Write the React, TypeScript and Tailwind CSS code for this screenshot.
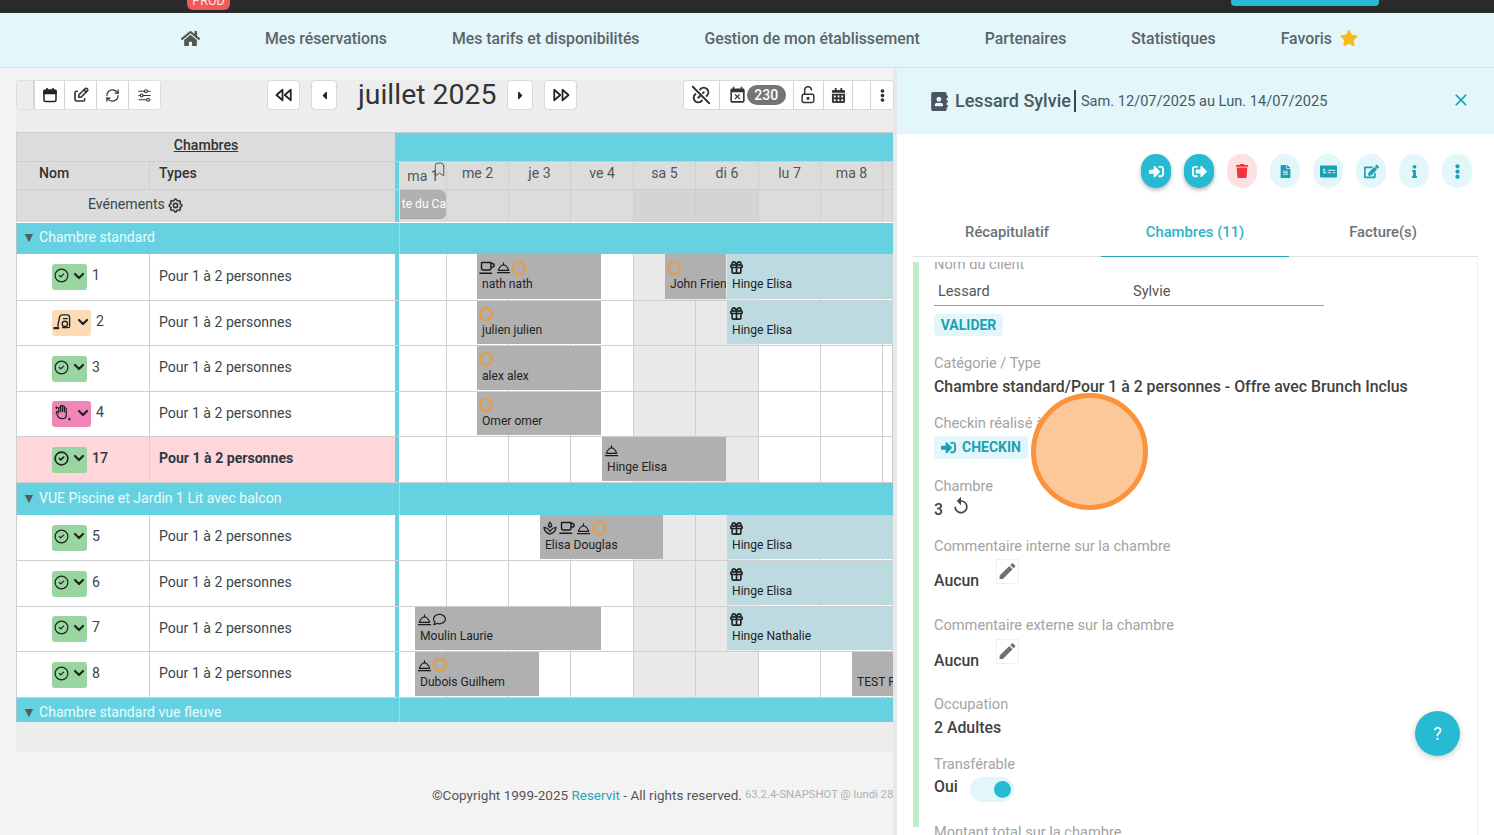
import React from 'react'
import {
  FaHome, FaStar, FaCaretLeft, FaCaretRight, FaAddressBook, FaSignInAlt, FaSignOutAlt,
  FaTrash, FaFileAlt, FaMoneyCheckAlt, FaEdit, FaInfo, FaEllipsisV, FaCalendarAlt, FaRegComment,
} from 'react-icons/fa'
import { MdOutlineSpa, MdEdit, MdEventBusy, MdClose, MdReplay } from 'react-icons/md'
import {
  TbEdit, TbAdjustmentsHorizontal, TbPlayerTrackPrev, TbPlayerTrackNext, TbLinkOff, TbLockOpen, TbSettings, TbGift, TbBookmark, TbCircleCheck, TbChevronDown,
} from 'react-icons/tb'
import { LuRefreshCw } from 'react-icons/lu'

const columns = [
  { w: 'w-[47px]', label: 'ma 1', pb: 'pt-[2px]' },
  { w: 'w-[62px]', label: 'me 2', pb: 'pb-[3px]' },
  { w: 'w-[62px]', label: 'je 3', pb: 'pb-[3px]' },
  { w: 'w-[63px]', label: 've 4', pb: 'pb-[3px]' },
  { w: 'w-[62px]', label: 'sa 5', pb: 'pb-[3px]', weekend: true },
  { w: 'w-[63px]', label: 'di 6', pb: 'pb-[3px]', weekend: true },
  { w: 'w-[62px]', label: 'lu 7', pb: 'pb-[3px]' },
  { w: 'w-[62px]', label: 'ma 8', pb: 'pb-[3px]' },
  { w: 'w-[10px]', label: '', pb: '' },
]

type Bar = { pos: string; name: string; icons?: string[]; pale?: boolean }
type Room = { h: string; status: 'ok' | 'clean' | 'hand'; num: string; bars: Bar[]; hot?: boolean }

const hinge = (name: string): Bar => ({ pos: 'left-[327px] w-[166px]', name, icons: ['gift'], pale: true })

const standard: Room[] = [
  { h: 'h-[47px]', status: 'ok', num: '1', bars: [
    { pos: 'left-[77px] w-[124px]', name: 'nath nath', icons: ['coffee', 'bell', 'ring'] },
    { pos: 'left-[265px] w-[61px]', name: 'John Friend', icons: ['ring'] },
    hinge('Hinge Elisa'),
  ] },
  { h: 'h-[45px]', status: 'clean', num: '2', bars: [
    { pos: 'left-[77px] w-[124px]', name: 'julien julien', icons: ['ring'] },
    hinge('Hinge Elisa'),
  ] },
  { h: 'h-[46px]', status: 'ok', num: '3', bars: [{ pos: 'left-[77px] w-[124px]', name: 'alex alex', icons: ['ring'] }] },
  { h: 'h-[45px]', status: 'hand', num: '4', bars: [{ pos: 'left-[77px] w-[124px]', name: 'Omer omer', icons: ['ring'] }] },
  { h: 'h-[46px]', status: 'ok', num: '17', hot: true, bars: [{ pos: 'left-[202px] w-[124px]', name: 'Hinge Elisa', icons: ['bell'] }] },
]

const piscine: Room[] = [
  { h: 'h-[46px]', status: 'ok', num: '5', bars: [
    { pos: 'left-[140px] w-[123px]', name: 'Elisa Douglas', icons: ['spa', 'coffee', 'bell', 'ring'] },
    hinge('Hinge Elisa'),
  ] },
  { h: 'h-[46px]', status: 'ok', num: '6', bars: [hinge('Hinge Elisa')] },
  { h: 'h-[45px]', status: 'ok', num: '7', bars: [
    { pos: 'left-[15px] w-[186px]', name: 'Moulin Laurie', icons: ['bell', 'comment'] },
    hinge('Hinge Nathalie'),
  ] },
  { h: 'h-[46px]', status: 'ok', num: '8', bars: [
    { pos: 'left-[15px] w-[124px]', name: 'Dubois Guilhem', icons: ['bell', 'ring'] },
    { pos: 'left-[452px] w-[41px]', name: 'TEST R' },
  ] },
]

const CoffeeIcon = () => (
  <svg viewBox="0 0 16 16" className="size-[16px]" fill="none" stroke="#1a1a1a" strokeWidth="1.4" strokeLinecap="round" strokeLinejoin="round">
    <path d="M2.5 2.5 H12 V8 a2 2 0 0 1 -2 2 H4.5 a2 2 0 0 1 -2 -2 Z" />
    <path d="M12 3.5 H13.3 a1.6 1.6 0 0 1 0 3.6 H12" />
    <path d="M1 13.2 H12.5" strokeWidth="1.6" />
  </svg>
)

const BellIcon = () => (
  <svg viewBox="0 0 16 16" className="size-[15px]" fill="none" stroke="#1a1a1a" strokeWidth="1.2" strokeLinecap="round" strokeLinejoin="round">
    <path d="M2.5 11 Q4.5 5.5 8 5 Q11.5 5.5 13.5 11 Z" />
    <path d="M8 3 V5" />
    <path d="M1.5 13.5 H14.5" />
  </svg>
)

const CalendarIcon = () => (
  <svg viewBox="0 0 16 16" className="size-[16px]" fill="none" stroke="#222" strokeWidth="1.5">
    <rect x="2" y="3" width="12" height="11.5" rx="1.5" />
    <path d="M2 4 H14 V6.5 H2 Z" fill="#222" />
    <path d="M5 1 V3 M11 1 V3" strokeWidth="1.6" />
  </svg>
)

const BarIcon = ({ name }: { name: string }) => {
  if (name === 'ring') return <span className="block size-[14px] rounded-full border-2 border-[#ea9b3f]" />
  if (name === 'coffee') return <CoffeeIcon />
  if (name === 'bell') return <BellIcon />
  if (name === 'spa') return <MdOutlineSpa className="size-[16px]" />
  if (name === 'comment') return <FaRegComment className="size-[13px]" />
  return <TbGift className="size-[15px] stroke-[2.6]" />
}

const VacuumIcon = () => (
  <svg viewBox="0 0 20 20" className="size-[19px]" fill="none" stroke="#222" strokeWidth="1.4" strokeLinecap="round" strokeLinejoin="round">
    <path d="M5 15 L7 5 Q7.5 3 10 3 H15 Q17.5 3 17.5 6 V15 Q17.5 16.5 16 16.5 H10" />
    <circle cx="12.5" cy="12.5" r="2.8" />
    <path d="M11 7 H15" />
    <path d="M1.5 17 H5.5" strokeWidth="2.4" />
  </svg>
)

const HandIcon = () => (
  <svg viewBox="0 0 20 20" className="size-[19px]" fill="none" stroke="#222" strokeWidth="1.3" strokeLinecap="round" strokeLinejoin="round">
    <path d="M6 10 V5.5 a1 1 0 0 1 2 0 V9 M8 9 V3.5 a1 1 0 0 1 2 0 V9 M10 9 V4 a1 1 0 0 1 2 0 V9.5 M12 9.5 V6 a1 1 0 0 1 2 0 V12 q0 4.5 -4.5 4.5 q-3 0 -4.5 -3 L3.6 10.5 a1 1 0 0 1 1.8 -1 L6 10.5" />
    <path d="M2.5 5 H5 M3.7 3.8 V6.2 M16 17 H18.5 M17.2 15.8 V18.2" strokeWidth="1" />
  </svg>
)

const StatusBadge = ({ status, hot }: { status: Room['status']; hot?: boolean }) => {
  const bg = status === 'ok' ? 'bg-[#98d5a0] w-[35px]' : status === 'clean' ? 'bg-[#fbdcb6] w-[39px]' : 'bg-[#f085b8] w-[39px]'
  return (
    <div className={`flex h-[26px] items-center rounded-[3px] pb-[3px] pl-[1px] text-[#222] ${bg}`}>
      {status === 'ok' && <TbCircleCheck className={`size-[17px] ${hot ? 'stroke-[2.4]' : 'stroke-[1.7]'}`} />}
      {status === 'clean' && <VacuumIcon />}
      {status === 'hand' && <HandIcon />}
      <TbChevronDown className={`size-[16px] stroke-[3.2] ${status === 'ok' ? 'ml-[1px]' : 'ml-[3px]'}`} />
    </div>
  )
}

const Timeline = ({ bars }: { bars: Bar[] }) => (
  <div className="relative flex h-full w-[493px] overflow-hidden">
    {columns.map((c, i) => (
      <div key={i} className={`h-full border-r border-[#cfcfcf] last:border-r-0 ${c.w} ${c.weekend ? 'bg-[#e9e9e9]' : 'bg-white'}`} />
    ))}
    {bars.map((b, i) => (
      <div
        key={i}
        className={`absolute top-0 bottom-[1px] flex flex-col justify-center overflow-hidden pb-[1px] pl-[2px] whitespace-nowrap text-[12.1px] text-[#222] ${b.pos} ${b.pale ? 'bg-[#bddae0]' : 'bg-[#b0b0b0]'}`}
      >
        <div className="flex h-[15px] items-center gap-[1px]">
          {b.icons?.map((name, k) => <BarIcon key={k} name={name} />)}
        </div>
        <div className="mt-[1px] pl-[3px] leading-[16px]">{b.name}</div>
      </div>
    ))}
  </div>
)

const RoomRow = ({ room }: { room: Room }) => (
  <div className={`flex border-b border-[#cfcfcf] ${room.h}`}>
    <div className={`flex h-full w-[379px] border-l border-[#cfcfcf] text-[14.1px] ${room.hot ? 'bg-[#ffd6d9] font-bold text-[#2d3b42]' : 'bg-white text-[#37474f]'}`}>
      <div className="flex w-[133px] items-center border-r border-[#cfcfcf] pl-[35px]">
        <StatusBadge status={room.status} hot={room.hot} />
        <span className={`ml-[5px] -mt-[2px] ${room.hot ? 'font-medium' : ''}`}>{room.num}</span>
      </div>
      <div className="flex flex-1 items-center pb-[1px] pl-[9px]">Pour 1 à 2 personnes</div>
    </div>
    <div className="h-full w-[4px] bg-[#66d1e0]" />
    <div className="h-full w-[1px] bg-white" />
    <Timeline bars={room.bars} />
  </div>
)

const GroupRow = ({ label, h, pt }: { label: string; h: string; pt: string }) => (
  <div className={`flex overflow-hidden bg-[#66d1e0] ${h}`}>
    <div className={`flex w-[379px] items-start border-l border-[#a9c9cf] leading-[20px] text-[14.1px] text-[#eafbfd] ${pt}`}>
      <span className="ml-[5px] w-[17px] text-[14px] text-[#4f5f63]">▼</span>
      <span>{label}</span>
    </div>
    <div className="ml-[4px] h-full w-[1px] bg-[#9fdbe4]" />
  </div>
)

const ToolCell = ({ w, children }: { w: string; children?: React.ReactNode }) => (
  <div className={`flex h-full items-center justify-center border-l border-[#d4d4d4] bg-white text-[#333] first:border-l-0 ${w}`}>{children}</div>
)

const NavBtn = ({ w, ml, children }: { w: string; ml: string; children: React.ReactNode }) => (
  <div className={`flex h-[30px] items-center justify-center rounded-[4px] border border-[#d8d8d8] bg-white text-[#222] ${w} ${ml}`}>{children}</div>
)

const Toolbar = () => (
  <div className="flex h-[30px] w-[878px] items-center">
    <div className="flex h-full w-[145px] overflow-hidden rounded-[4px] border border-[#dedede]">
      <div className="h-full w-[17px] border-r border-[#d4d4d4] bg-[#ededed]" />
      <ToolCell w="w-[30px]"><CalendarIcon /></ToolCell>
      <ToolCell w="w-[32px]"><TbEdit className="size-[18px] stroke-[2.2]" /></ToolCell>
      <ToolCell w="w-[32px]"><LuRefreshCw className="size-[15px] stroke-[2]" /></ToolCell>
      <ToolCell w="w-[32px]"><TbAdjustmentsHorizontal className="size-[17px] stroke-[1.5]" /></ToolCell>
    </div>
    <NavBtn w="w-[33px]" ml="ml-[106px]"><TbPlayerTrackPrev className="size-[18px] stroke-[2.4]" /></NavBtn>
    <NavBtn w="w-[26px]" ml="ml-[11px]"><FaCaretLeft className="size-[13px]" /></NavBtn>
    <div className="ml-[21px] w-[149px] text-[28.4px] leading-[30px] text-[#333]">juillet 2025</div>
    <NavBtn w="w-[26px]" ml="ml-0"><FaCaretRight className="size-[13px]" /></NavBtn>
    <NavBtn w="w-[33px]" ml="ml-[11px]"><TbPlayerTrackNext className="size-[18px] stroke-[2.4]" /></NavBtn>
    <div className="ml-[106px] flex h-full w-[211px] overflow-hidden rounded-[4px] border border-[#d8d8d8]">
      <ToolCell w="w-[35px]"><TbLinkOff className="size-[22px] stroke-[2.1]" /></ToolCell>
      <ToolCell w="w-[75px]">
        <MdEventBusy className="size-[19px]" />
        <span className="-mr-[1px] flex h-[20px] w-[39px] items-center justify-center rounded-full bg-[#757575] text-[14px] font-medium text-white">230</span>
      </ToolCell>
      <ToolCell w="w-[30px]"><TbLockOpen className="size-[20px] stroke-[1.8]" /></ToolCell>
      <ToolCell w="w-[30px]"><FaCalendarAlt className="size-[15px]" /></ToolCell>
      <ToolCell w="w-[18px]" />
      <ToolCell w="w-[23px]"><FaEllipsisV className="size-[13px]" /></ToolCell>
    </div>
  </div>
)

const Planning = () => (
  <div className="mt-[22px] w-[877px] text-[14.1px]">
    <div className="flex h-[29px] border-t border-[#cfcfcf]">
      <div className="flex w-[379px] items-center justify-center border-l border-[#cfcfcf] bg-[#dcdcdc] pb-[3px] font-medium text-[#333] underline">Chambres</div>
      <div className="w-[4px] bg-[#66d1e0]" />
      <div className="flex-1 bg-[#66d1e0]" />
    </div>
    <div className="flex h-[28px] border-t border-[#cfcfcf] bg-[#dcdcdc]">
      <div className="flex w-[134px] items-center border-x border-[#cfcfcf] pb-[3px] pl-[22px] font-medium text-[#333]">Nom</div>
      <div className="flex w-[245px] items-center pb-[3px] pl-[9px] font-medium text-[#333]">Types</div>
      <div className="w-[4px] bg-[#66d1e0]" />
      <div className="w-[1px]" />
      <div className="relative flex h-full w-[493px]">
        {columns.map((c, i) => (
          <div key={i} className={`flex h-full items-center justify-center border-r border-[#cfcfcf] text-[#555] last:border-r-0 ${c.w} ${c.pb}`}>{c.label}</div>
        ))}
        <TbBookmark className="absolute left-[31px] -top-[1px] size-[17px] stroke-[1.4] text-[#555]" />
      </div>
    </div>
    <div className="flex h-[34px] border-y border-[#cfcfcf] border-b-white bg-[#dcdcdc]">
      <div className="flex w-[379px] items-center border-l border-[#cfcfcf] pb-[2px] pl-[71px] text-[#37474f]">
        Evénements
        <TbSettings className="ml-[2px] size-[17px] stroke-[2.2] text-[#333]" />
      </div>
      <div className="w-[4px] bg-[#66d1e0]" />
      <div className="w-[1px]" />
      <div className="relative flex h-full w-[493px]">
        {columns.map((c, i) => (
          <div key={i} className={`h-full border-r border-[#cfcfcf] last:border-r-0 ${c.w} ${c.weekend ? 'bg-[#d4d4d4]' : ''}`} />
        ))}
        <div className="absolute left-0 top-0 flex h-[29px] w-[46px] items-center justify-end overflow-hidden whitespace-nowrap rounded-r-[6px] border-b border-[#a5a5a5] bg-[#b0b0b0] text-[12.1px] text-white">te du Ca</div>
      </div>
    </div>
    <GroupRow label="Chambre standard" h="h-[31px]" pt="pt-[4px]" />
    {standard.map(r => <RoomRow key={r.num} room={r} />)}
    <GroupRow label="VUE Piscine et Jardin 1 Lit avec balcon" h="h-[32px]" pt="pt-[5px]" />
    {piscine.map(r => <RoomRow key={r.num} room={r} />)}
    <GroupRow label="Chambre standard vue fleuve" h="h-[24px]" pt="pt-[4px]" />
  </div>
)

const RoundAction = ({ tone, children }: { tone: 'solid' | 'danger' | 'soft'; children: React.ReactNode }) => {
  const cls = tone === 'solid'
    ? 'bg-[#26bbd2] text-white shadow-[0_2px_4px_rgba(0,0,0,0.3)]'
    : tone === 'danger' ? 'bg-[#fde0e2] text-[#f5323c]' : 'bg-[#e3f6f9] text-[#1a9fb5]'
  return <div className={`flex h-[34px] w-[30px] items-center justify-center rounded-full ${cls}`}>{children}</div>
}

const Label = ({ children, className = '' }: { children: React.ReactNode; className?: string }) => (
  <div className={`h-[20px] text-[14.6px] leading-[21px] whitespace-nowrap text-[#a3a3a3] ${className}`}>{children}</div>
)

const Value = ({ children, className = '' }: { children: React.ReactNode; className?: string }) => (
  <div className={`h-[20px] text-[15.84px] font-medium leading-[20px] whitespace-nowrap text-[#424242] ${className}`}>{children}</div>
)

const EditBox = () => (
  <div className="ml-[17px] flex h-[25px] w-[23px] items-center justify-center border border-[#f0f0f0] pb-[2px] text-[#707070]">
    <MdEdit className="size-[22px]" />
  </div>
)

const Drawer = () => (
  <div className="relative flex h-full flex-1 flex-col bg-white">
    <div className="flex h-[66px] shrink-0 items-center bg-[#e3f6f9] pl-[33px] pr-[23px] text-[#455a64]">
      <FaAddressBook className="size-[19px] text-[#4a5560]" />
      <span className="ml-[6px] border-r-2 border-[#37474f] pr-[3px] text-[18px] font-medium leading-[22px]">Lessard Sylvie</span>
      <span className="ml-[5px] pt-[2px] text-[14.6px]">Sam. 12/07/2025 au Lun. 14/07/2025</span>
      <MdClose className="ml-auto -mt-[3px] size-[20px] text-[#1a9fb5]" />
    </div>
    <div className="mt-[20px] flex h-[34px] shrink-0 items-center justify-end gap-[13px] pr-[22px]">
      <RoundAction tone="solid"><FaSignInAlt className="size-[15px]" /></RoundAction>
      <RoundAction tone="solid"><FaSignOutAlt className="size-[15px]" /></RoundAction>
      <RoundAction tone="danger"><FaTrash className="size-[14px]" /></RoundAction>
      <RoundAction tone="soft"><FaFileAlt className="size-[13px]" /></RoundAction>
      <RoundAction tone="soft"><FaMoneyCheckAlt className="size-[17px]" /></RoundAction>
      <RoundAction tone="soft"><FaEdit className="size-[15px]" /></RoundAction>
      <RoundAction tone="soft"><FaInfo className="size-[13px]" /></RoundAction>
      <RoundAction tone="soft"><FaEllipsisV className="size-[15px]" /></RoundAction>
    </div>
    <div className="mx-[16px] mt-[27px] flex h-[42px] shrink-0 border-b border-[#e0e0e0] text-[14.8px] font-medium">
      <div className="flex w-[188px] items-center justify-center pb-[6px] text-[#6b7278]">Récapitulatif</div>
      <div className="-mb-[1px] flex w-[188px] items-center justify-center border-b border-[#26a5b8] pb-[6px] text-[#2fb3c7]">Chambres (11)</div>
      <div className="flex w-[188px] items-center justify-center pb-[6px] text-[#6b7278]">Facture(s)</div>
    </div>
    <div className="mx-[16px] mt-[5px] min-h-0 flex-1 overflow-hidden border-r border-[#ececec]">
      <div className="h-full border-l-[6px] border-[#bdeec8]">
        <div className="-mt-[8px] pl-[15px]">
          <Label>Nom du client</Label>
          <div className="mt-[3px] flex h-[29px] w-[390px] items-center border-b border-[#a0a0a0] pl-[4px] pt-[2px] text-[14.6px] text-[#555]">
            <span className="w-[195px]">Lessard</span>
            <span>Sylvie</span>
          </div>
          <div className="mt-[8px] flex h-[22px] w-[69px] items-center justify-center rounded-[4px] bg-[#e3f6f9] text-[14px] font-bold text-[#1f9fb2]">VALIDER</div>
          <Label className="mt-[17px]">Catégorie / Type</Label>
          <Value className="mt-[4px]">Chambre standard/Pour 1 à 2 personnes - Offre avec Brunch Inclus</Value>
          <Label className="mt-[16px]">Checkin réalisé à</Label>
          <div className="mt-[3px] flex h-[23px] w-[94px] items-center justify-center rounded-[4px] bg-[#e3f6f9] text-[14px] font-bold text-[#1f9fb2]">
            <FaSignInAlt className="mr-[6px] size-[15px]" />CHECKIN
          </div>
          <Label className="mt-[17px]">Chambre</Label>
          <div className="mt-[3px] flex h-[20px] items-center">
            <Value className="pt-[1px]">3</Value>
            <MdReplay className="ml-[8px] -mt-[7px] size-[20px] text-[#444]" />
          </div>
          <Label className="mt-[17px]">Commentaire interne sur la chambre</Label>
          <div className="mt-[3px] flex h-[25px] items-start">
            <Value className="mt-[12px]">Aucun</Value>
            <EditBox />
          </div>
          <Label className="mt-[31px]">Commentaire externe sur la chambre</Label>
          <div className="mt-[4px] flex h-[26px] items-start">
            <Value className="mt-[12px]">Aucun</Value>
            <EditBox />
          </div>
          <Label className="mt-[29px]">Occupation</Label>
          <Value className="mt-[4px]">2 Adultes</Value>
          <Label className="mt-[16px]">Transférable</Label>
          <div className="mt-[3px] flex h-[25px] items-start">
            <Value>Oui</Value>
            <div className="ml-[12px] flex h-[25px] w-[44px] items-center justify-end rounded-full bg-[#e3f6f9] pr-[3px]">
              <span className="size-[17px] rounded-full bg-[#26bbd2]" />
            </div>
          </div>
          <Label className="mt-[20px]">Montant total sur la chambre</Label>
        </div>
      </div>
    </div>
    <div className="absolute left-[518px] top-[643px] flex h-[45px] w-[45px] items-center justify-center rounded-full bg-[#26bbd2] text-[18px] text-white shadow-[0_2px_6px_rgba(0,0,0,0.2)]">?</div>
  </div>
)

const navItems = ['Mes réservations', 'Mes tarifs et disponibilités', 'Gestion de mon établissement', 'Partenaires', 'Statistiques']

export default function App() {
  return (
    <div className="relative flex h-screen w-full flex-col overflow-hidden bg-[#f3f3f3] font-['Roboto',sans-serif]">
      <div className="flex h-[13px] shrink-0 items-start bg-[#2a2a2a] pl-[187px]">
        <div className="flex h-[10px] w-[43px] items-start justify-center overflow-hidden rounded-b-[6px] bg-[#f05a5a] text-[12.5px] leading-[12px] text-[#fde4e4]">
          <span className="-mt-[5px]">PROD</span>
        </div>
        <div className="ml-auto mr-[115px] h-[6px] w-[148px] rounded-b-[4px] bg-[#26bbd2]" />
      </div>
      <div className="flex h-[55px] shrink-0 items-center gap-[65px] border-b border-[#cbe6ec] bg-[#e3f6f9] pb-[3px] pl-[181px] text-[15.8px] font-medium text-[#5a6468]">
        <FaHome className="size-[19px] text-[#555]" />
        {navItems.map(t => <span key={t}>{t}</span>)}
        <span className="flex items-center">Favoris<FaStar className="ml-[8px] -mt-[2px] size-[18px] text-[#fbb81c]" /></span>
      </div>
      <div className="flex min-h-0 flex-1">
        <div className="flex w-[897px] shrink-0 flex-col border-r-[4px] border-[#e8e8e8]">
          <div className="mx-[16px] mt-[12px] h-[672px] w-[877px] bg-[#ededed]">
            <Toolbar />
            <Planning />
          </div>
          <div className="mt-[6px] flex h-[77px] items-center overflow-hidden whitespace-nowrap pb-[2px] pl-[432px] text-[13.5px] text-[#555]">
            ©Copyright 1999-2025&nbsp;<span className="text-[#2aa5b8]">Reservit</span>&nbsp;- All rights reserved.
            <span className="ml-[3px] text-[11.3px] text-[#b0b0b0]">63.2.4-SNAPSHOT @ lundi 28 juillet</span>
          </div>
        </div>
        <Drawer />
      </div>
      <div className="absolute left-[1031px] top-[393px] size-[117px] rounded-full border-[5px] border-[#fb923c] bg-[#fdc899]" />
    </div>
  )
}
